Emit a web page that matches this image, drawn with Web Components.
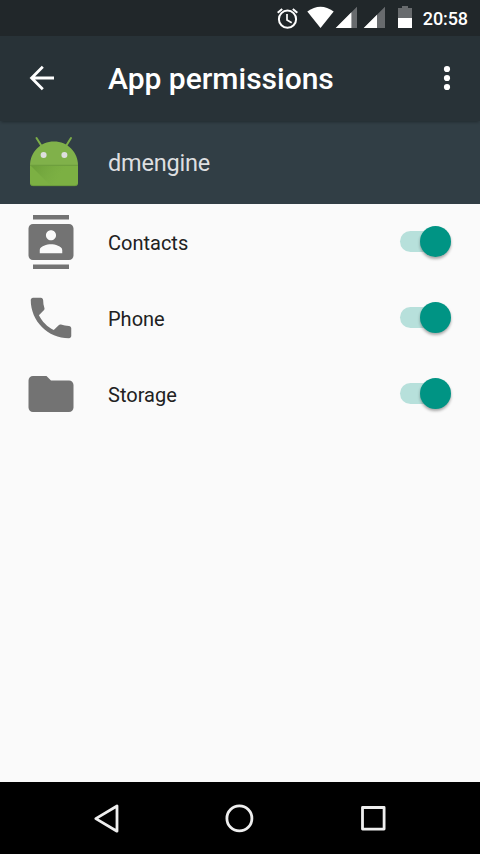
<!DOCTYPE html>
<html lang="en">
<head>
<meta charset="utf-8">
<title>App permissions</title>
<style>
html,body{margin:0;height:100%;background:#fafafa;font-family:Roboto,"Noto Sans",sans-serif}
</style>
</head>
<body>
<permissions-screen></permissions-screen>
<script>
const define = (name, html) => customElements.define(name, class extends HTMLElement {
  constructor() {
    super();
    this.attachShadow({ mode: 'open' }).innerHTML = typeof html === 'function' ? html(this) : html;
  }
});

define('status-bar', `
<style>
:host{display:flex;height:36px;background:#21272a;color:#fff;justify-content:flex-end;align-items:flex-start;padding-right:12px;box-sizing:border-box;font-size:18px;font-weight:500}
svg{display:block;width:147px;height:36px;flex:none}
span{line-height:38px;white-space:nowrap;letter-spacing:-.1px}
</style>
<svg viewBox="276 0 147 36" aria-hidden="true">
<g fill="none" stroke="#fff" stroke-width="2"><circle cx="287.5" cy="19.2" r="8.6"/><path d="M287 14v6l4.7 2.8" stroke-width="1.7"/><path d="M277.7 12.8l4.5-3.8M297.3 12.8l-4.5-3.8"/></g>
<path fill="#fff" d="M307.3 11.6Q320.5 2 333.7 11.6L320.5 28z"/>
<path fill="#686b6e" d="M357 6.7V28h-21.3zM385 6.7V28h-21.3z"/>
<path fill="#fff" d="M335.7 28L351.4 12.3V28zM363.7 28L377 14.7V28z"/>
<path fill="#686b6e" d="M398 8h4V6h6v2h4v10h-14z"/><path fill="#fff" d="M398 18h14v10h-14z"/>
</svg><span>20:58</span>`);

define('app-bar', `
<style>
:host{display:flex;height:85px;background:#283237;color:#fff;align-items:center;padding:0 18px 0 24px;box-sizing:border-box;box-shadow:0 2px 3px -1px #0005;position:relative;z-index:1}
svg{display:block;width:36px;height:36px;flex:none;margin-bottom:1px}
h1{margin:0 0 0 48px;flex:1;font-size:30px;line-height:40px;font-weight:500;white-space:nowrap}
.more{width:30px}
</style>
<svg viewBox="24 60 36 36" aria-hidden="true"><path d="M54 78H32M42.8 66.8L31.6 78l11.2 11.2" fill="none" stroke="#fff" stroke-width="2.8"/></svg>
<h1><slot></slot></h1>
<svg class="more" viewBox="432 60 30 36" fill="#fff" aria-hidden="true"><circle cx="447" cy="69" r="3.1"/><circle cx="447" cy="78" r="3.1"/><circle cx="447" cy="87" r="3.1"/></svg>`);

define('app-header', `
<style>
:host{display:flex;height:83px;background:#313e45;color:#dedfe0;align-items:center;padding-left:24px;box-sizing:border-box;font-size:23.500px;letter-spacing:-.2px}
svg{display:block;width:60px;height:60px;margin:0 24px 0 0;flex:none}
</style>
<svg viewBox="24 133 60 60" aria-hidden="true">
<defs><linearGradient id="s" gradientUnits="userSpaceOnUse" x1="32" y1="166" x2="56" y2="182"><stop stop-color="#447520" stop-opacity=".3"/><stop offset="1" stop-color="#65993a" stop-opacity="0"/></linearGradient></defs>
<path d="M36.500 138l5 8M71 138l-5 8" stroke="#7cad48" stroke-width="2" stroke-linecap="round"/>
<path fill="#80b14a" d="M30 165.500c0-13.500 10.500-24 24-24s24 10.500 24 24z"/>
<path fill="#7cb043" d="M30 165h48v18q0 3-3 3H33q-3 0-3-3z"/>
<path fill="url(#s)" d="M31 166h46v19H50z"/>
<path d="M30 165.300h48" stroke="#6b9b3c"/><path d="M31 184.700q.7 1 2 1h42q1.300 0 2-1" stroke="#65943a" fill="none" stroke-width=".8"/>
<circle cx="43.600" cy="155" r="3" fill="#dedede"/><circle cx="64.400" cy="155" r="3" fill="#dedede"/>
</svg><slot></slot>`);

const glyphs = {
  contacts: 'M20 0H4v2h16V0zM4 24h16v-2H4v2zM20 4H4c-1.100 0-2 .9-2 2v12c0 1.100.9 2 2 2h16c1.100 0 2-.9 2-2V6c0-1.100-.9-2-2-2zm-8 2.750c1.240 0 2.250 1.010 2.250 2.250S13.240 11.250 12 11.250 9.750 10.240 9.750 9s1.010-2.250 2.250-2.250zM17 17H7v-1.500c0-1.670 3.330-2.500 5-2.500s5 .83 5 2.500V17z',
  phone: 'M6.620 10.790c1.440 2.830 3.760 5.140 6.590 6.590l2.200-2.200c.27-.27.67-.36 1.020-.24 1.120.37 2.330.57 3.570.57.550 0 1 .45 1 1V20c0 .55-.45 1-1 1C10.610 21 3 13.390 3 4c0-.55.45-1 1-1h3.500c.55 0 1 .45 1 1 0 1.250.2 2.450.57 3.570.11.350.03.740-.25 1.020l-2.200 2.200z',
  storage: 'M10 4H4c-1.100 0-1.990.9-1.990 2L2 18c0 1.100.9 2 2 2h16c1.100 0 2-.9 2-2V8c0-1.100-.9-2-2-2h-8l-2-2z'
};

define('permission-icon', el => `
<style>:host{display:block;width:54px;height:54px;flex:none}svg{display:block;width:54px;height:54px}</style>
<svg viewBox="0 0 24 24" fill="#737373" fill-rule="evenodd" aria-hidden="true"><path d="${glyphs[el.getAttribute('name')]}"/></svg>`);

define('toggle-switch', `
<style>
:host{display:grid;grid-template-columns:51px;align-items:center;width:51px;height:31px;flex:none}
b,i{grid-area:1/1;display:block}
b{width:42px;height:21px;border-radius:10.500px;background:#b7e0db}
i{justify-self:end;width:31px;height:31px;border-radius:50%;background:#009484;box-shadow:0 2px 3px #0005}
</style><b></b><i></i>`);

define('permission-row', el => `
<style>
:host{display:flex;align-items:center;height:76px;padding:0 29px 0 24px;box-sizing:border-box;color:#212121;font-size:20px}
span{flex:1;margin-left:30px;padding-top:2px}
toggle-switch{margin-bottom:1px}
</style>
<permission-icon name="${el.getAttribute('icon')}"></permission-icon><span><slot></slot></span><toggle-switch role="switch" aria-checked="true"></toggle-switch>`);

define('nav-bar', `
<style>
:host{display:block;height:72px;background:#000}
svg{display:block;width:480px;height:72px}
</style>
<svg viewBox="0 782 480 72" fill="none" stroke="#eee" stroke-width="2.8" stroke-linejoin="round" aria-hidden="true">
<path d="M117 806v25.200L95.800 818.600z"/><circle cx="239.400" cy="818.400" r="12.500"/><path d="M362.500 807.500h21.600v21.600h-21.600z"/>
</svg>`);

define('permissions-screen', `
<style>
:host{display:flex;flex-direction:column;height:854px;width:480px;overflow:hidden;background:#fafafa}
status-bar,app-bar,app-header,nav-bar{flex:none}
main{flex:1}
</style>
<status-bar></status-bar>
<app-bar>App permissions</app-bar>
<app-header>dmengine</app-header>
<main>
<permission-row icon="contacts">Contacts</permission-row>
<permission-row icon="phone">Phone</permission-row>
<permission-row icon="storage">Storage</permission-row>
</main>
<nav-bar></nav-bar>`);
</script>
</body>
</html>
